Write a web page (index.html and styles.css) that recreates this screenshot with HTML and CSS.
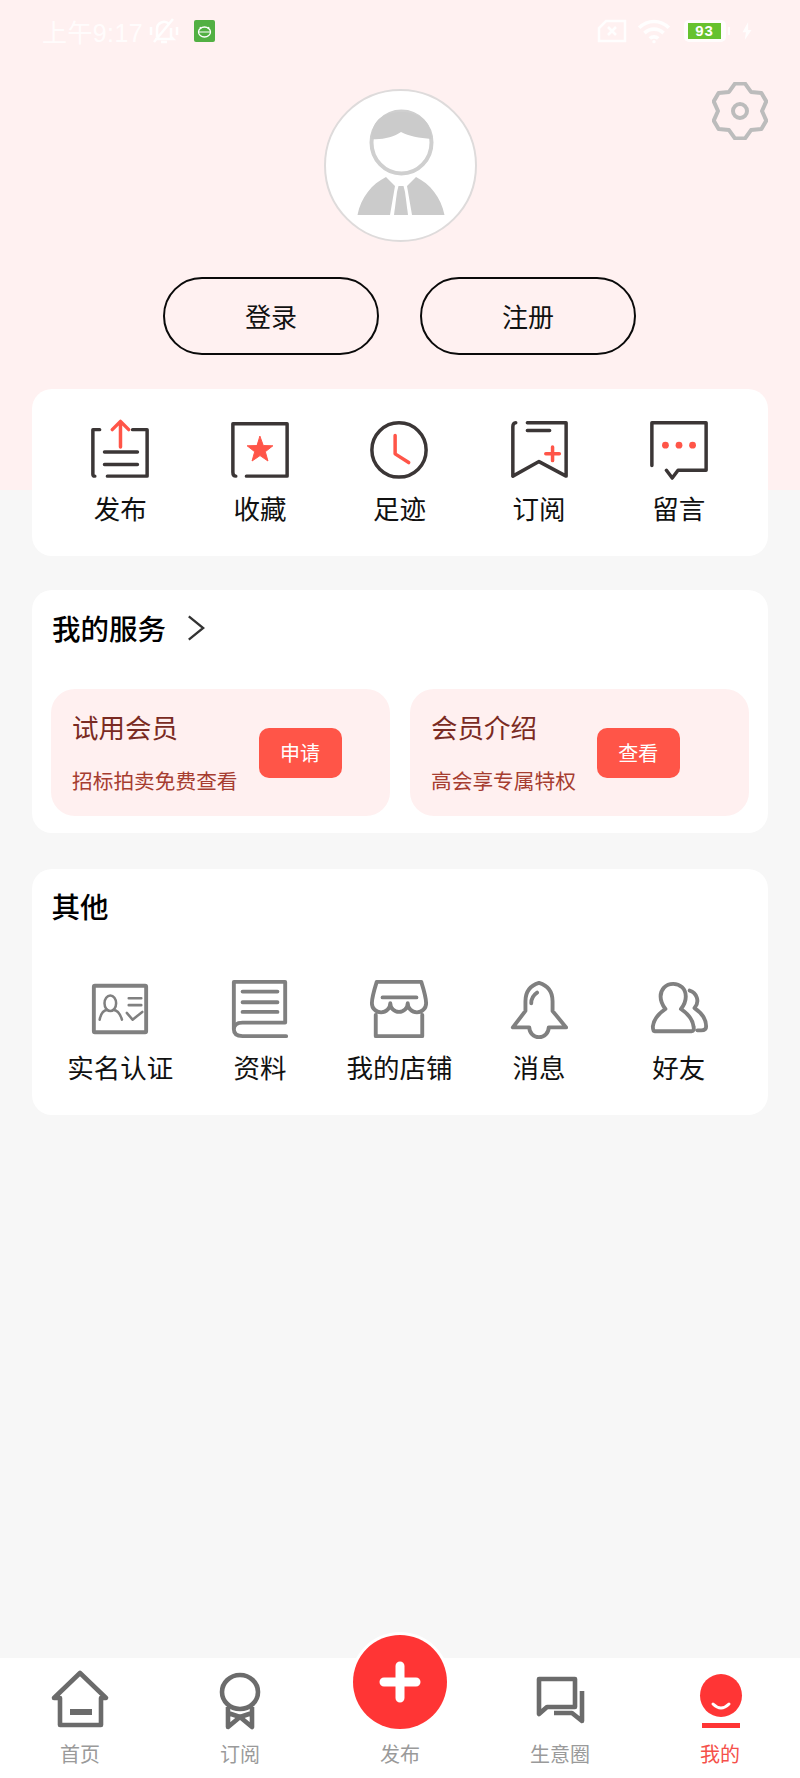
FILE: index.html
```html
<!DOCTYPE html>
<html lang="zh-CN">
<head>
<meta charset="utf-8">
<title>我的</title>
<link rel="stylesheet" href="styles.css">
</head>
<body>
<div class="page">
  <div class="status">
    <span class="time">上午9:17</span>
    <svg class="st-mute" viewBox="0 0 32 28"><path d="M9 20V12a7 7 0 0 1 12-5M23 11v9l2 2H7M13 25h6M6 25L25 2M3 10v8M29 10v8"/></svg>
    <svg class="st-app" viewBox="0 0 21 22"><rect width="21" height="22" rx="2" fill="#52b043"/><ellipse cx="10.500" cy="12" rx="6" ry="5" fill="none" stroke="#fff" stroke-width="1.300"/><path d="M6 7l1 2M15 7l-1 2M5 12h11" fill="none" stroke="#fff" stroke-width="1.200"/></svg>
    <span class="st-spacer"></span>
    <svg class="st-sim" viewBox="0 0 30 24"><path d="M9 2h19v20H2V9zM11 8l8 8M19 8l-8 8"/></svg>
    <svg class="st-wifi" viewBox="0 0 32 24"><path d="M2 9c8-8 20-8 28 0M7 14c5-5 13-5 18 0M12 19c2-2 6-2 8 0"/><circle cx="16" cy="22" r="1.600"/></svg>
    <div class="st-batt"><span class="st-level">93</span></div>
    <span class="st-nub"></span>
    <svg class="st-bolt" viewBox="0 0 10 16"><path d="M6 0L1 9h3l-1 7 6-9H6z"/></svg>
  </div>

  <section class="hero">
    <svg class="gear" viewBox="0 0 56 58"><path d="M23.100 1.400H32.900L39 9.900 49.400 11 54.300 19.400 50 29 54.300 38.600 49.400 47 39 48.100 32.900 56.600H23.100L17 48.100 6.600 47 1.700 38.600 6 29 1.700 19.400 6.600 11 17 9.900Z"/><circle cx="28" cy="29" r="7"/></svg>
    <div class="avatar">
      <svg viewBox="2 2 149 149">
        <ellipse cx="77.500" cy="53.500" rx="30" ry="31" fill="none" stroke="#cfcfcf" stroke-width="4"/>
        <path d="M47.500 50C47.500 29 62 23 77.500 23 95 23 107.500 32 107.500 50 95 49 85 47 77 43 70 48 58 51 47.500 50Z" fill="#cbcbcb"/>
        <path d="M33.500 126C37 108 48 95 62 88L71 97 66 126ZM120.500 126C117 108 106 95 92 88L83 97 88 126Z" fill="#cbcbcb"/>
        <path d="M74.500 97H79.500L81 103 84 126H70L73 103Z" fill="#cbcbcb"/>
      </svg>
    </div>
    <div class="auth">
      <button class="auth-btn">登录</button>
      <button class="auth-btn">注册</button>
    </div>
  </section>

  <section class="card actions">
    <div class="grid5">
      <div class="item">
        <svg class="ic dark" viewBox="0 0 64 64"><path d="M11 12H4V58M45 12H60V60H19M16 35H50M16 48H50M4 58q0 2 2 2"/><path class="red" d="M32.500 30V4M24 12L32.500 3.500 41 12"/></svg>
        <span class="label">发布</span>
      </div>
      <div class="item">
        <svg class="ic dark" viewBox="0 0 64 64"><path d="M4 56V6H60V60H18M4 56q0 4 3 4"/><polygon class="redf" points="32,19 35.400,28.400 45.300,28.700 37.500,34.800 40.200,44.400 32,38.800 23.800,44.400 26.500,34.800 18.700,28.700 28.600,28.400"/></svg>
        <span class="label">收藏</span>
      </div>
      <div class="item">
        <svg class="ic dark" viewBox="0 0 64 64"><circle cx="32" cy="33" r="28"/><path class="red" d="M28 18V37L42 46"/></svg>
        <span class="label">足迹</span>
      </div>
      <div class="item">
        <svg class="ic dark" viewBox="0 0 64 64"><path d="M20 5H60V60L32 45 5 60V9Q5 5 8 5M20 13H43"/><path class="red" d="M46 30V44M39 37H53"/></svg>
        <span class="label">订阅</span>
      </div>
      <div class="item">
        <svg class="ic dark" viewBox="0 0 64 64"><path d="M4 49V5H60V54H31L25 62 19 54"/><circle class="redf nostroke" cx="18" cy="28" r="3.500"/><circle class="redf nostroke" cx="32" cy="28" r="3.500"/><circle class="redf nostroke" cx="46" cy="28" r="3.500"/></svg>
        <span class="label">留言</span>
      </div>
    </div>
  </section>

  <section class="card services">
    <div class="card-title">
      <span class="title-text">我的服务</span>
      <svg class="chev" viewBox="0 0 20 30"><path d="M2 2L18 15 2 28"/></svg>
    </div>
    <div class="vip-grid">
      <div class="vip">
        <div class="vip-text"><div class="vip-title">试用会员</div><div class="vip-sub">招标拍卖免费查看</div></div>
        <button class="vip-btn">申请</button>
      </div>
      <div class="vip">
        <div class="vip-text"><div class="vip-title">会员介绍</div><div class="vip-sub">高会享专属特权</div></div>
        <button class="vip-btn">查看</button>
      </div>
    </div>
  </section>

  <section class="card others">
    <div class="card-title"><span class="title-text">其他</span></div>
    <div class="grid5 others-grid">
      <div class="item">
        <svg class="ic gray" viewBox="0 0 64 64"><rect x="5" y="8" width="54" height="48" rx="1"/><g class="thin"><ellipse cx="22" cy="26" rx="6" ry="8"/><path d="M11 43Q13 33 19 33M34 43Q31 33 25 33M41 21H54M41 28H54M39 36L45 43 55 35"/></g></svg>
        <span class="label">实名认证</span>
      </div>
      <div class="item">
        <svg class="ic gray" viewBox="0 0 64 64"><path d="M5 53V4H58V46H14Q5 46 5 53T14 60H59M14 14H50M14 25H50M14 35H50"/></svg>
        <span class="label">资料</span>
      </div>
      <div class="item">
        <svg class="ic gray" viewBox="0 0 64 64"><path d="M9 4H55Q60 20 60 26A9.500 9.500 0 0 1 41 26 9 9 0 0 1 23 26 9.500 9.500 0 0 1 4 26Q4 20 9 4ZM8 38V60H56V38M15 20H50"/></svg>
        <span class="label">我的店铺</span>
      </div>
      <div class="item">
        <svg class="ic gray" viewBox="0 0 64 64"><path d="M32 5C22 8 18 14 18 24V34L5 51H22A10 10 0 0 0 42 51H60L46 34V24C46 14 42 8 32 5ZM24 26Q24 19 30 15"/></svg>
        <span class="label">消息</span>
      </div>
      <div class="item">
        <svg class="ic gray" viewBox="0 0 64 64"><path d="M7 55H45Q48 55 47 50C46 42 40 36 34 32 38 27 39 22 39 19 39 11 33 6 26 6 18 6 13 12 13 19 13 24 15 28 18 32 12 36 6 42 5 50Q5 55 7 55ZM43 13C50 15 54 24 48 31 54 35 60 42 60 50Q60 54 55 54H51"/></svg>
        <span class="label">好友</span>
      </div>
    </div>
  </section>

  <nav class="nav">
    <div class="nav-item">
      <svg class="nic" viewBox="0 0 64 64"><path d="M6 31L32 6 58 31H53V58H12V31Z"/><path class="nic-bar" d="M22 45H44"/></svg>
      <span class="nav-label">首页</span>
    </div>
    <div class="nav-item">
      <svg class="nic" viewBox="0 0 64 64"><ellipse cx="32" cy="25" rx="18" ry="17"/><path d="M20 40V60L32 50 44 60V40M20 46L32 50 44 46"/></svg>
      <span class="nav-label">订阅</span>
    </div>
    <div class="nav-item">
      <div class="fab"><svg viewBox="0 0 42 42"><path d="M21 5V37M5 21H37"/></svg></div>
      <span class="nav-gap"></span>
      <span class="nav-label">发布</span>
    </div>
    <div class="nav-item">
      <svg class="nic" viewBox="0 0 64 64"><path d="M11 12H47V40H19L11 47ZM54 24V54L44 46H26"/></svg>
      <span class="nav-label">生意圈</span>
    </div>
    <div class="nav-item active">
      <svg class="nme" viewBox="0 0 64 64"><ellipse cx="33" cy="28.500" rx="21" ry="21.500" fill="#ff3535"/><path d="M25 37Q33 45 41 37" fill="none" stroke="#fff" stroke-width="3" stroke-linecap="round"/><rect x="14" y="56" width="38" height="5" fill="#ff3535"/></svg>
      <span class="nav-label">我的</span>
    </div>
  </nav>
</div>
</body>
</html>
```

FILE: styles.css
```css
html, body {
  margin: 0;
  padding: 0;
}

body {
  font-family: "Liberation Sans", "Noto Sans CJK SC", sans-serif;
  color: #111;
}

.page {
  width: 800px;
  height: 1778px;
  display: flex;
  flex-direction: column;
  overflow: hidden;
  background: linear-gradient(#fff1f1 490px, #f7f7f7 490px);
}

/* status bar */
.status {
  height: 62px;
  padding: 0 47px 0 42px;
  display: flex;
  align-items: center;
  box-sizing: border-box;
}

.time {
  font-size: 25px;
  color: rgba(255, 255, 255, 0.85);
  letter-spacing: 0.4px;
}

.status svg {
  fill: none;
  stroke: rgba(255, 255, 255, 0.88);
  stroke-width: 2.6;
}

.st-mute { width: 32px; height: 28px; margin-left: 5px; }
.status .st-app { width: 21px; height: 22px; margin-left: 14px; stroke: none; }
.st-spacer { flex: 1; }
.st-sim { width: 30px; height: 24px; }
.status .st-wifi { width: 34px; height: 26px; margin-left: 10px; stroke-width: 3.4; }
.status .st-wifi circle { fill: rgba(255, 255, 255, 0.9); stroke: none; }

.st-batt {
  width: 42px;
  height: 22px;
  margin-left: 13px;
  padding: 3px 5px 3px 4px;
  box-sizing: border-box;
  border-radius: 5px;
  background: rgba(255, 255, 255, 0.8);
  display: flex;
}

.st-level {
  flex: 1;
  background: #66c22e;
  color: #fff;
  font-size: 15px;
  font-weight: 700;
  line-height: 16px;
  text-align: center;
  letter-spacing: 1px;
}

.st-nub {
  width: 2px;
  height: 8px;
  margin-left: 2px;
  background: rgba(255, 255, 255, 0.8);
}

.status .st-bolt {
  width: 12px;
  height: 18px;
  margin-left: 11px;
  fill: rgba(255, 255, 255, 0.85);
  stroke: none;
}

/* hero */
.hero {
  position: relative;
  height: 327px;
  padding-top: 27px;
  box-sizing: border-box;
  display: flex;
  flex-direction: column;
  align-items: center;
  gap: 35px;
}

.gear {
  position: absolute;
  top: 20px;
  right: 32px;
  width: 56px;
  height: 58px;
  fill: none;
  stroke: #bcbcbc;
  stroke-width: 4;
  stroke-linejoin: round;
}

.avatar {
  width: 153px;
  height: 153px;
  box-sizing: border-box;
  border: 2px solid #dedbdb;
  border-radius: 50%;
  background: #fff;
  overflow: hidden;
}

.avatar svg {
  display: block;
  width: 149px;
  height: 149px;
}

.auth {
  display: flex;
  gap: 41px;
  padding-right: 1px;
}

.auth-btn {
  width: 216px;
  height: 78px;
  border: 2.5px solid #0a0a0a;
  border-radius: 39px;
  background: transparent;
  font: inherit;
  font-size: 26px;
  color: #111;
  padding: 0 0 1px;
}

/* cards */
.card {
  margin: 0 32px;
  border-radius: 20px;
  background: #fff;
}

.actions {
  padding: 28px 19.5px 30px 18.5px;
}

.services {
  margin-top: 34px;
  padding: 19px 19px 17px;
}

.others {
  margin-top: 36px;
  padding: 18px 19.5px 30px 18.5px;
}

.grid5 {
  display: grid;
  grid-template-columns: repeat(5, 1fr);
}

.others-grid {
  margin-top: 50px;
}

.item {
  display: flex;
  flex-direction: column;
  align-items: center;
}

.ic {
  display: block;
  width: 62px;
  height: 62px;
  margin: 1px 0;
  fill: none;
  stroke-linecap: round;
  stroke-linejoin: round;
}

.dark { stroke: #3b3636; stroke-width: 3.6; }
.gray { stroke: #808080; stroke-width: 4; }
.thin { stroke-width: 2.6; }

.ic .red { stroke: #ff5548; }
.ic .redf { fill: #ff5548; stroke: #ff5548; stroke-width: 1; }
.ic .nostroke { stroke: none; }

.label {
  margin-top: 13px;
  font-size: 26.5px;
  line-height: 32px;
  color: #111;
  white-space: nowrap;
}

.others .label {
  margin-top: 12px;
}

.card-title {
  height: 40px;
  padding-left: 1px;
  display: flex;
  align-items: center;
  font-size: 28.5px;
  font-weight: 500;
  color: #000;
}

.title-text {
  margin-bottom: 3px;
}

.chev {
  width: 18px;
  height: 28px;
  margin-bottom: 2px;
  margin-left: 21px;
  fill: none;
  stroke: #333;
  stroke-width: 2.6;
}

.vip-grid {
  margin-top: 40px;
  display: grid;
  grid-template-columns: 339px 339px;
  gap: 20px;
}

.vip {
  height: 127px;
  padding-left: 21px;
  box-sizing: border-box;
  border-radius: 24px;
  background: #fff0f0;
  display: flex;
  align-items: center;
  gap: 21px;
}

.vip-text {
  padding-top: 3px;
}

.vip-title {
  font-size: 26.5px;
  line-height: 36px;
  color: #7a2a22;
}

.vip-sub {
  margin-top: 20px;
  font-size: 20.7px;
  line-height: 30px;
  color: #a63d30;
  white-space: nowrap;
}

.vip-btn {
  width: 83px;
  height: 50px;
  padding: 0;
  border: 0;
  border-radius: 10px;
  background: #ff5548;
  color: #fff;
  font: inherit;
  font-size: 20px;
}

/* bottom nav */
.nav {
  margin-top: auto;
  height: 120px;
  box-sizing: border-box;
  padding-top: 9px;
  background: #fff;
  display: grid;
  grid-template-columns: repeat(5, 160px);
}

.nav-item {
  position: relative;
  display: flex;
  flex-direction: column;
  align-items: center;
}

.nic {
  display: block;
  width: 64px;
  height: 64px;
  fill: none;
  stroke: #6b6b6b;
  stroke-width: 4.6;
  stroke-linejoin: round;
}

.nic-bar {
  stroke-width: 6;
}

.nme {
  display: block;
  width: 64px;
  height: 64px;
}

.nav-gap {
  display: block;
  height: 64px;
}

.nav-label {
  margin-top: 12px;
  font-size: 20px;
  line-height: 24px;
  color: #9a9a9a;
}

.active .nav-label {
  color: #f5504a;
}

.fab {
  position: absolute;
  top: -32px;
  left: 33px;
  width: 94px;
  height: 94px;
  border-radius: 50%;
  background: #ff3535;
  box-shadow: 0 0 0 3px #fff;
  display: flex;
  align-items: center;
  justify-content: center;
}

.fab svg {
  width: 42px;
  height: 42px;
  fill: none;
  stroke: #fff;
  stroke-width: 9;
  stroke-linecap: round;
}
```
